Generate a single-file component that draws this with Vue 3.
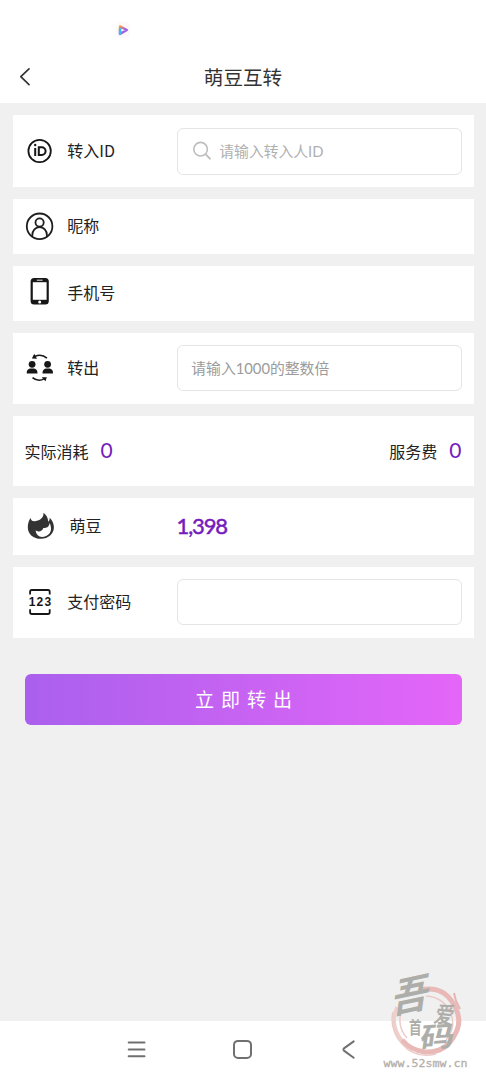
<script setup>
import { ref } from 'vue'

const recipient = ref('')
const amount = ref('')
const password = ref('')
</script>

<template>
  <div class="screen">
    <div class="status">
      <svg class="play" width="16" height="18" viewBox="0 0 16 18">
        <defs>
          <linearGradient id="playFill" x1="0" y1="0" x2="1" y2="1">
            <stop offset="0" stop-color="#f6a23c" />
            <stop offset=".5" stop-color="#b05fe0" />
            <stop offset="1" stop-color="#7a63ee" />
          </linearGradient>
        </defs>
        <rect x="1" y="1" width="14" height="16" rx="5" fill="#fdf9fb" />
        <path d="M5 5.4 11.8 9 5 12.9Z" fill="#fff" stroke="url(#playFill)" stroke-width="2.4" stroke-linejoin="round" />
        <path d="M5 8V12.8" stroke="#45b8ee" stroke-width="2.4" stroke-linecap="round" />
      </svg>
    </div>
    <header class="header">
      <svg class="back" width="12" height="20" viewBox="0 0 12 20">
        <path d="M10 1.8 1.8 9.7l8.2 8" fill="none" stroke="#333" stroke-width="1.7" stroke-linecap="round" stroke-linejoin="round" />
      </svg>
      <h1>萌豆互转</h1>
    </header>

    <main class="content">
      <section class="card id-card">
        <svg class="icon" width="30" height="30" viewBox="-.6 0 30 30" fill="none" stroke="#171717">
          <circle cx="15" cy="15" r="11.2" stroke-width="1.8" />
          <path d="M10.6 12.1V20M14.2 11.2V19h2.9a3.9 3.9 0 0 0 0-7.8h-2.9Z" stroke-width="2" />
          <circle cx="10.6" cy="9" r="1.2" fill="#171717" stroke="none" />
        </svg>
        <span class="label">转入ID</span>
        <label class="field search">
          <svg width="20" height="20" viewBox="-.4 0 20 20" fill="none" stroke="#bdbdbd">
            <circle cx="8.2" cy="8.2" r="6.8" stroke-width="1.6" />
            <path d="m13.1 13.2 4.4 4.5" stroke-width="1.9" stroke-linecap="round" />
          </svg>
          <input v-model="recipient" placeholder="请输入转入人ID" />
        </label>
      </section>

      <section class="card name-card">
        <svg class="icon" width="30" height="30" viewBox="-.6 -.3 30 30" fill="none" stroke="#1e1e1e" stroke-width="1.8">
          <circle cx="15" cy="15" r="12.8" />
          <circle cx="15" cy="11.2" r="4.1" />
          <path d="M7.7 24.9v-1.2a7.3 8 0 0 1 14.6 0v1.2" stroke-linecap="round" />
        </svg>
        <span class="label">昵称</span>
      </section>

      <section class="card phone-card">
        <svg class="icon" width="30" height="30" viewBox="-.6 0 30 30">
          <rect x="6" y="2" width="18.2" height="26.6" rx="3.5" fill="#171717" />
          <rect x="8.2" y="6.2" width="13.8" height="17.6" fill="#fff" />
          <path d="M12.6 4.2h5" stroke="#fff" stroke-width=".9" stroke-linecap="round" />
          <circle cx="15.1" cy="26.1" r="1.5" fill="#fff" />
        </svg>
        <span class="label">手机号</span>
      </section>

      <section class="card out-card">
        <svg class="icon" width="30" height="30" viewBox="-.8 0 30 30" fill="#171717">
          <circle cx="7.3" cy="11.3" r="3.4" />
          <path d="M2 20.6v-1.3c0-2 1.6-3.4 3.2-3.7h4.2c1.7.3 3.2 1.7 3.2 3.7v1.3Z" />
          <circle cx="22.8" cy="11.3" r="3.4" />
          <path d="M17.8 20.6v-1.3c0-2 1.6-3.4 3.2-3.7h3.9c1.7.3 3.2 1.7 3.2 3.7v1.3Z" />
          <path d="M10 3.4c4-1.8 8.6-1.4 12.1 1.8M7.7 24.6c3.6 3 8.2 3.3 12 1" fill="none" stroke="#171717" stroke-width="1.6" />
          <path d="M9.4.7 7.1 5.4l5.1.3ZM22 24.2l-5.2.1 3.9 3.9Z" />
        </svg>
        <span class="label">转出</span>
        <label class="field"><input v-model="amount" placeholder="请输入1000的整数倍" /></label>
      </section>

      <section class="card cost-card">
        <span>实际消耗<b>0</b></span>
        <span>服务费<b>0</b></span>
      </section>

      <section class="card bean-card">
        <svg class="icon flame" width="30" height="30" viewBox="0 0 30 30">
          <path d="M17.5 1.8c4.1 3.3 4.4 6.4 4.9 9 1-.9 1.3-2.4 1.2-4.1 2.8 2.5 4.3 6 4.3 9.6 0 6.6-5.5 11.5-13 11.5S1.8 22.9 1.8 16.4c0-4 1.1-7.3 2.9-9.4.4 2.4 1.5 3.4 3.6 3.3C13 10 17.9 7.5 17.5 1.8Z" fill="#333" />
          <path d="M23.6 12c-.4 3.6-2.6 5.1-6.2 5.1-.9 2.5-2.8 3.5-4.9 3.4-1.2 0-2.1-.5-2.8-1.2.2 4 2.7 6.6 6.5 6.6 4.8 0 8.8-3.5 8.8-7.9 0-2.3-.5-4.3-1.4-6Z" fill="#fff" />
        </svg>
        <span class="label">萌豆</span>
        <strong class="balance">1,398</strong>
      </section>

      <section class="card pay-card">
        <svg class="icon" width="30" height="30" viewBox="-.6 0 30 30">
          <path d="M5.5 7.5V4.7q0-1.7 1.7-1.7h16.2q1.7 0 1.7 1.7v2.8M5.5 22.3v3q0 1.7 1.7 1.7h16.2q1.7 0 1.7-1.7v-3" fill="none" stroke="#171717" stroke-width="1.8" />
          <text x="15.9" y="19.2" text-anchor="middle">123</text>
        </svg>
        <span class="label">支付密码</span>
        <label class="field"><input v-model="password" type="password" /></label>
      </section>

      <button class="submit">立即转出</button>
    </main>

    <nav class="navbar">
      <svg width="22" height="22" viewBox="0 0 22 22">
        <path d="M2.7 4.5h15.8M2.7 11.5h15.8M2.7 18.3h15.8" stroke="#707070" stroke-width="2" stroke-linecap="round" />
      </svg>
      <svg width="22" height="22" viewBox="0 0 22 22">
        <rect x="2" y="2.9" width="17" height="17" rx="4" fill="none" stroke="#707070" stroke-width="2" />
      </svg>
      <svg width="22" height="22" viewBox="0 0 22 22">
        <path d="M15.7 3.4 6.3 10.1q-1.7 1.4 0 2.8l9.4 6.8" fill="none" stroke="#707070" stroke-width="2" stroke-linecap="round" />
      </svg>
    </nav>

    <svg class="watermark" width="120" height="120" viewBox="0 0 120 120">
      <g fill="none">
        <path d="M31 47A31 31 0 0 0 41 85Q56 96 74 90" stroke="#efcfcc" stroke-width="3.5" />
        <path d="M54 30Q76 25 87 43T88 76Q79 93 59 92Q44 90 36 80" stroke="#e8b9b6" stroke-width="5" />
        <path d="M27 52Q23 69 36 84T70 94M36 49Q30 66 41 78M60 36Q77 37 84 52T80 80" stroke="#ebcbc8" stroke-width="1.4" />
        <path d="M88 33l2 8 4 8" stroke="#e4b5b2" stroke-width="2" />
      </g>
      <g class="brush">
        <text font-size="38" transform="translate(25 54) rotate(-12) skewX(-20) scale(1 1.04)">吾</text>
        <text font-size="21" transform="translate(67 62) rotate(6) skewX(-10) scale(.88 1.1)">爱</text>
        <text font-size="14" transform="translate(43 74) scale(.9 1.25)">首</text>
        <text font-size="30" transform="translate(53 88) rotate(-4) skewX(-12) scale(1.15 .92)">码</text>
      </g>
      <text class="url" x="17.5" y="107" textLength="84" lengthAdjust="spacingAndGlyphs">www.52smw.cn</text>
    </svg>
  </div>
</template>

<style>
body {
  background: #f0f0f0;
}
</style>

<style scoped>
.screen {
  position: relative;
  display: flex;
  flex-direction: column;
  height: 1080px;
  overflow: hidden;
  background: #f0f0f0;
  color: #222;
  font-family: "Noto Sans CJK SC", sans-serif;
  font-size: 16px;
}
.screen * {
  box-sizing: border-box;
}
svg {
  display: block;
  flex: none;
}
.status {
  height: 51px;
  padding: 21px 0 0 115px;
  background: #fff;
}
.header {
  display: flex;
  align-items: center;
  height: 52px;
  padding: 0 19px;
  background: #fff;
}
.header h1 {
  flex: 1;
  margin: 0 12px 0 0;
  color: #333;
  font-size: 19.6px;
  font-weight: 400;
  line-height: 28px;
  text-align: center;
}
.content {
  display: flex;
  flex: 1;
  flex-direction: column;
  gap: 12px;
  padding: 12px 12px 0 12.5px;
}
.card {
  display: flex;
  align-items: center;
  padding: 0 12.5px 0 12px;
  background: #fff;
}
.id-card { height: 72px; }
.name-card,
.phone-card { height: 55px; }
.out-card { height: 71px; }
.cost-card { height: 69.5px; justify-content: space-between; }
.bean-card { height: 57.5px; }
.pay-card { height: 70.5px; }
.icon {
  margin: 0 13.3px 0 -.5px;
}
.name-card .icon {
  margin-top: -1px;
}
.phone-card .icon {
  margin-top: -5px;
}
.out-card .icon {
  margin-top: -2px;
}
.bean-card .flame {
  margin: -1px 14px 0 1px;
}
.pay-card .icon {
  margin-top: -1px;
}
.label {
  width: 110px;
  padding-bottom: 2px;
  line-height: 24px;
  white-space: nowrap;
}
.name-card .label,
.phone-card .label {
  padding-bottom: 3px;
}
.out-card .label {
  padding-bottom: 3px;
}
.bean-card .label {
  width: 107px;
}
.field {
  display: flex;
  flex: 1;
  align-items: center;
  height: 46px;
  padding: 0 13px;
  border: 1px solid #e5e5e5;
  border-radius: 6px;
}
.out-card .field {
  margin-top: -1px;
}
.search {
  gap: 7px;
  height: 47px;
  padding-left: 14px;
}
input {
  flex: 1;
  width: 0;
  min-width: 0;
  padding: 0 0 1px;
  border: 0;
  outline: 0;
  background: none;
  font: 14.8px/24px Lato, "Noto Sans CJK SC", sans-serif;
}
input::placeholder {
  color: #9b9b9b;
  opacity: 1;
}
.search input::placeholder {
  color: #b0b0b0;
}
.cost-card span {
  display: flex;
  align-items: center;
  gap: 12px;
  line-height: 24px;
}
.cost-card b,
.balance {
  color: #751bbd;
  font-family: Lato, sans-serif;
  font-size: 21px;
  font-weight: 400;
  line-height: 24px;
}
.cost-card b {
  margin-top: -2px;
}
.balance {
  margin-top: -1px;
  font-size: 22px;
  font-weight: 400;
  font-kerning: none;
  letter-spacing: -1.1px;
  -webkit-text-stroke: .5px #751bbd;
}
.icon text {
  fill: #171717;
  font: bold 12px "Liberation Sans", sans-serif;
  letter-spacing: 1.2px;
}
.submit {
  height: 51px;
  margin: 24.5px 12.5px 0 12px;
  padding: 0 0 2px 8px;
  border: 0;
  border-radius: 6px;
  background: linear-gradient(90deg, #aa60ed, #e466f8);
  color: #fff;
  font: 19px/28px "Noto Sans CJK SC", sans-serif;
  letter-spacing: 7px;
}
.navbar {
  display: flex;
  gap: 84px;
  height: 59px;
  padding: 17px 0 0 125.5px;
  background: #fff;
}
.watermark {
  position: absolute;
  right: 0;
  bottom: 0;
  overflow: visible;
}
.brush text {
  fill: #adaea9;
  font-weight: 700;
}
.url {
  fill: #b5b0ab;
  font: 11px "DejaVu Sans Mono", monospace;
  stroke: #b5b0ab;
  stroke-width: .3px;
}
</style>
